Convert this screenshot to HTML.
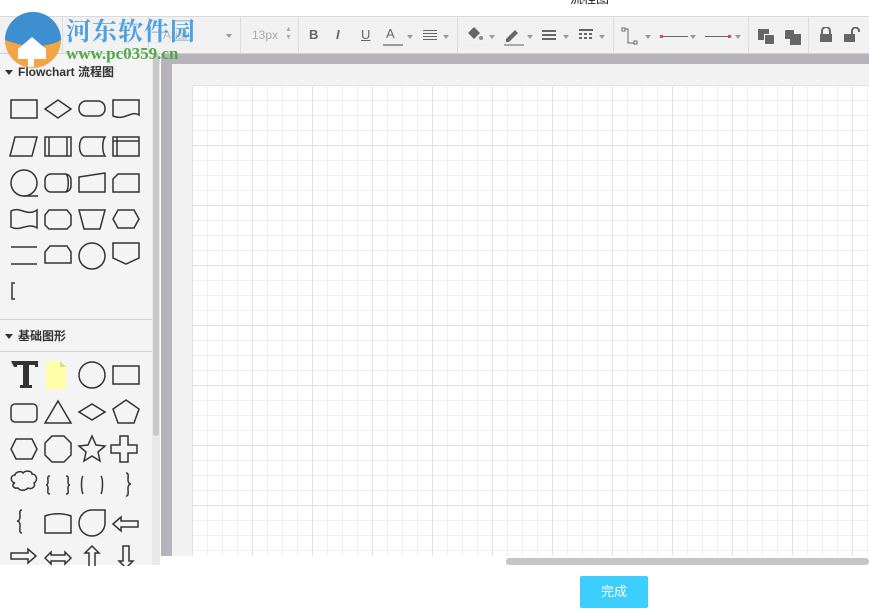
<!DOCTYPE html>
<html><head><meta charset="utf-8"><style>
*{margin:0;padding:0;box-sizing:border-box}
body{width:869px;height:609px;overflow:hidden;background:#fff;font-family:"Liberation Sans","Noto Sans CJK SC",sans-serif;position:relative}
.abs{position:absolute}
#tb{left:0;top:16px;width:869px;height:38px;background:#f1f1f1;border-top:1px solid #dadada;border-bottom:1px solid #cfcfcf}
.sep{position:absolute;top:0;width:1px;height:37px;background:#dcdcdc}
.tri{position:absolute;width:0;height:0;border-left:3px solid transparent;border-right:3px solid transparent;border-top:4px solid #999}
#side{left:0;top:54px;width:152px;height:511px;background:#f4f4f4}
.hdr{position:absolute;left:0;width:152px;height:32px;font-size:12px;font-weight:bold;color:#333;line-height:32px;padding-left:18px}
.hdr:before{content:"";position:absolute;left:5px;top:14px;border-left:4px solid transparent;border-right:4px solid transparent;border-top:5px solid #333}
#canvas{left:172px;top:64px;width:697px;height:492px;background:#f2f2f2}
#grid{left:192px;top:85px;width:677px;height:471px;background-color:#fff;
background-image:linear-gradient(#e2e2e2 1px,transparent 1px),linear-gradient(90deg,#e2e2e2 1px,transparent 1px),linear-gradient(#efefef 1px,transparent 1px),linear-gradient(90deg,#efefef 1px,transparent 1px);
background-size:60px 60px,60px 60px,15px 15px,15px 15px}
</style></head><body>
<div class="abs" style="left:570px;top:-12px;font-size:13px;color:#222">流程图</div>
<div id="tb" class="abs">
 <div class="sep" style="left:62px"></div><div class="sep" style="left:148px"></div>
 <div class="abs" style="left:163px;top:11px;font-size:12px;color:#bbb">Arial</div><div class="tri" style="left:226px;top:17px"></div>
 <div class="sep" style="left:240px"></div>
 <div class="abs" style="left:252px;top:11px;font-size:12px;color:#aaa">13px</div>
 <div class="abs" style="left:285px;top:9px;font-size:7px;color:#aaa;line-height:8px">▲<br>▼</div>
 <div class="sep" style="left:298px"></div>
 <div class="abs" style="left:309px;top:10px;font-size:13px;font-weight:bold;color:#666">B</div>
 <div class="abs" style="left:336px;top:10px;font-size:13px;font-style:italic;font-weight:bold;color:#666">I</div>
 <div class="abs" style="left:361px;top:10px;font-size:13px;text-decoration:underline;color:#666">U</div>
 <div class="abs" style="left:386px;top:9px;font-size:13px;color:#666">A</div><div class="abs" style="left:383px;top:27px;width:20px;height:2px;background:#999"></div><div class="tri" style="left:407px;top:18px"></div>
 <div class="abs" style="left:423px;top:13px;width:14px;height:10px;background:repeating-linear-gradient(#666 0 1px,transparent 1px 3px)"></div><div class="tri" style="left:443px;top:18px"></div>
 <div class="sep" style="left:457px"></div>
 <svg class="abs" style="left:465px;top:8px" width="20" height="22"><path d="M3 8l6-6 6 6-6 6z" fill="#666"/><circle cx="16" cy="13" r="2" fill="#888"/><rect x="1" y="19" width="19" height="2" fill="#eee"/></svg><div class="tri" style="left:489px;top:18px"></div>
 <svg class="abs" style="left:502px;top:8px" width="22" height="22"><path d="M4 14l9-9 3 3-9 9H4z" fill="#666"/><rect x="2" y="19" width="20" height="2" fill="#aaa"/></svg><div class="tri" style="left:527px;top:18px"></div>
 <div class="abs" style="left:542px;top:13px;width:14px;height:10px;background:repeating-linear-gradient(#666 0 2px,transparent 2px 4px)"></div><div class="tri" style="left:563px;top:18px"></div>
 <div class="abs" style="left:579px;top:12px;width:14px;height:2px;background:#666"></div><div class="abs" style="left:579px;top:16px;width:14px;height:2px;background:repeating-linear-gradient(90deg,#666 0 3px,transparent 3px 5px)"></div><div class="abs" style="left:579px;top:20px;width:14px;height:2px;background:repeating-linear-gradient(90deg,#666 0 3px,transparent 3px 5px)"></div><div class="tri" style="left:599px;top:18px"></div>
 <div class="sep" style="left:613px"></div>
 <svg class="abs" style="left:621px;top:10px" width="20" height="20"><path d="M3 2h4v14h7" fill="none" stroke="#666"/><rect x="1" y="1" width="3" height="3" fill="#fff" stroke="#666"/><rect x="13" y="14" width="3" height="3" fill="#fff" stroke="#666"/></svg><div class="tri" style="left:645px;top:18px"></div>
 <div class="abs" style="left:661px;top:19px;width:27px;height:1px;background:#666"></div><div class="abs" style="left:660px;top:18px;width:3px;height:3px;background:#e44"></div><div class="tri" style="left:690px;top:18px"></div>
 <div class="abs" style="left:705px;top:19px;width:25px;height:1px;background:#666"></div><div class="abs" style="left:728px;top:18px;width:3px;height:3px;background:#e44"></div><div class="tri" style="left:735px;top:18px"></div>
 <div class="sep" style="left:748px"></div>
 <div class="abs" style="left:758px;top:12px;width:11px;height:11px;background:#666"></div><div class="abs" style="left:764px;top:17px;width:11px;height:11px;background:#666;border:1px solid #fff"></div>
 <div class="abs" style="left:784px;top:12px;width:11px;height:11px;background:#666;border:1px solid #fff"></div><div class="abs" style="left:790px;top:17px;width:11px;height:11px;background:#666"></div>
 <div class="sep" style="left:808px"></div>
 <svg class="abs" style="left:819px;top:10px" width="14" height="16"><path d="M3 7V4a4 4 0 0 1 8 0v3" fill="none" stroke="#666" stroke-width="2"/><rect x="1" y="7" width="12" height="8" fill="#666"/></svg>
 <svg class="abs" style="left:843px;top:10px" width="18" height="16"><path d="M9 7V4a3.5 3.5 0 0 1 7 0v1" fill="none" stroke="#666" stroke-width="2"/><rect x="1" y="7" width="11" height="8" fill="#666"/></svg>
</div>
<div id="side" class="abs">
 <div class="hdr" style="top:2px">Flowchart 流程图</div>
 <svg class="abs" style="left:0;top:32px" width="152" height="236" fill="none" stroke="#333" stroke-width="1.5">
  <rect x="11" y="14" width="26" height="18"/><path d="M45 23l13-9 13 9-13 9z"/><rect x="79" y="15" width="26" height="15" rx="7"/><path d="M113 14h26v15c-8-5-14 6-26 1z"/>
  <path d="M15 51h22l-5 19H10z"/><rect x="45" y="51" width="26" height="19"/><path d="M49 51v19M67 51v19"/><path d="M84 51h21c-3 4-3 15 0 19H84c-6-2-6-17 0-19z"/><rect x="113" y="51" width="26" height="19"/><path d="M117 51v19M113 55h26"/>
  <circle cx="24" cy="97" r="13"/><path d="M24 110h14"/><rect x="45" y="88" width="26" height="18" rx="6"/><path d="M66 88c3 3 3 15 0 18"/><path d="M79 91l26-4v19H79z"/><path d="M118 88h21v18h-26v-13z"/>
  <path d="M11 125c9-5 16 6 26-1v18c-9-6-17 4-26-1z"/><path d="M49 124h18l4 5v10l-4 4H49l-4-4v-10z"/><path d="M79 124h26l-5 19h-16z"/><path d="M118 124h16l5 9-5 9h-16l-5-9z"/>
  <path d="M11 161h26M11 178h26"/><path d="M45 177v-11l5-6h17l4 6v11z"/><circle cx="92" cy="170" r="13"/><path d="M113 157h26v15l-13 6-13-6z"/>
  <path d="M15 197h-3v16h3"/>
 </svg>
 <div class="abs" style="left:0;top:265px;width:152px;height:1px;background:#d3d3d3"></div>
 <div class="hdr" style="top:266px">基础图形</div>
 <div class="abs" style="left:0;top:297px;width:152px;height:1px;background:#d3d3d3"></div>
 <svg class="abs" style="left:0;top:298px" width="152" height="214" fill="none" stroke="#333" stroke-width="1.5">
  <path d="M11 9h27v6h-3v-2h-6v20h3v3h-12v-3h3V13h-6v2h-3z" fill="#333" stroke="none"/>
  <path d="M46 9h14l6 6v22H46z" fill="#ffffa8" stroke="none"/><path d="M60 9l6 6h-6z" fill="#dddd88" stroke="none"/>
  <circle cx="92" cy="23" r="13"/><rect x="113" y="14" width="26" height="18"/>
  <rect x="11" y="52" width="26" height="18" rx="4"/><path d="M58 49l13 22H45z"/><path d="M79 60l13-8 13 8-13 8z"/><path d="M126 48l13 9-5 14h-16l-5-14z"/>
  <path d="M16 87h16l5 10-5 10H16l-5-10z"/><path d="M52 84h12l7 7v12l-7 7H52l-7-7V91z"/><path d="M92 84l4 9 9 1-7 6 2 9-8-5-8 5 2-9-7-6 9-1z"/><path d="M120 84h8v9h9v8h-9v9h-8v-9h-9v-8h9z"/>
  <path d="M15 131c-5-1-5-8 0-8 1-4 7-4 8-2 3-3 9-2 9 1 5 0 6 7 2 9 2 3-2 7-6 5-3 3-8 3-10 0-5 1-7-4-3-5z"/>
  <path d="M50 124c-3 0-2 2-2 6 0 2-1 3-2 3 1 0 2 1 2 3 0 4-1 6 2 6M66 124c3 0 2 2 2 6 0 2 1 3 2 3-1 0-2 1-2 3 0 4 1 6-2 6"/>
  <path d="M83 124c-2 2-2 14 0 18M101 124c2 2 2 14 0 18"/>
  <path d="M126 121c3 0 2 3 2 7 0 2 1 4 3 4-2 0-3 2-3 4 0 5 1 8-2 8"/>
  <path d="M22 158c-3 0-2 3-2 7 0 2-1 4-3 4 2 0 3 2 3 4 0 5-1 8 2 8"/>
  <path d="M45 164c8-3 18-3 26 0v17H45z"/><path d="M92 158h13v13a13 13 0 1 1-26 0a13 13 0 0 1 13-13z"/><path d="M113 172l8-7v4h17v6h-17v4z"/>
  <path d="M11 207v-6h17v-4l8 7-8 7v-4H11z"/><path d="M45 206l6-6v3h14v-3l6 6-6 6v-3H51v3z"/><path d="M92 194l-7 7h4v14h6v-14h4z"/><path d="M123 194v15h-4l7 7 7-7h-4v-15z"/>
 </svg>
</div>
<div class="abs" style="left:152px;top:54px;width:8px;height:511px;background:#e8e8e8"></div>
<div class="abs" style="left:153px;top:54px;width:6px;height:382px;background:#c8c8c8;border-radius:3px"></div>
<div class="abs" style="left:161px;top:54px;width:708px;height:502px;background:#b6b3bd"></div>
<div id="canvas" class="abs"></div>
<div id="grid" class="abs"></div>
<div class="abs" style="left:161px;top:556px;width:708px;height:53px;background:#fff"></div>
<div class="abs" style="left:506px;top:558px;width:363px;height:7px;background:#c6c6c6;border-radius:3px"></div>
<div class="abs" style="left:580px;top:576px;width:68px;height:32px;background:#3ccffe;border-radius:2px;color:#fff;font-size:13px;text-align:center;line-height:32px">完成</div>
<svg class="abs" style="left:4px;top:9px" width="60" height="60"><circle cx="29" cy="31" r="28" fill="#f3a444"/><path d="M1 31a28 28 0 0 1 56 0c-10 6-30 10-56 0z" fill="#3d8fd2"/><path d="M14 40l14-12 14 12v10H14z" fill="#fff"/><rect x="24" y="42" width="6" height="16" fill="#fff"/></svg>
<div class="abs" style="left:66px;top:12px;font-size:25px;font-weight:bold;color:#3d9ae0;font-family:'Liberation Serif','Noto Serif CJK SC',serif;letter-spacing:1px;opacity:.9">河东软件园</div>
<div class="abs" style="left:66px;top:44px;font-size:17px;font-weight:bold;color:#4fa847;font-family:'Liberation Serif',serif">www.pc0359.cn</div>
</body></html>
